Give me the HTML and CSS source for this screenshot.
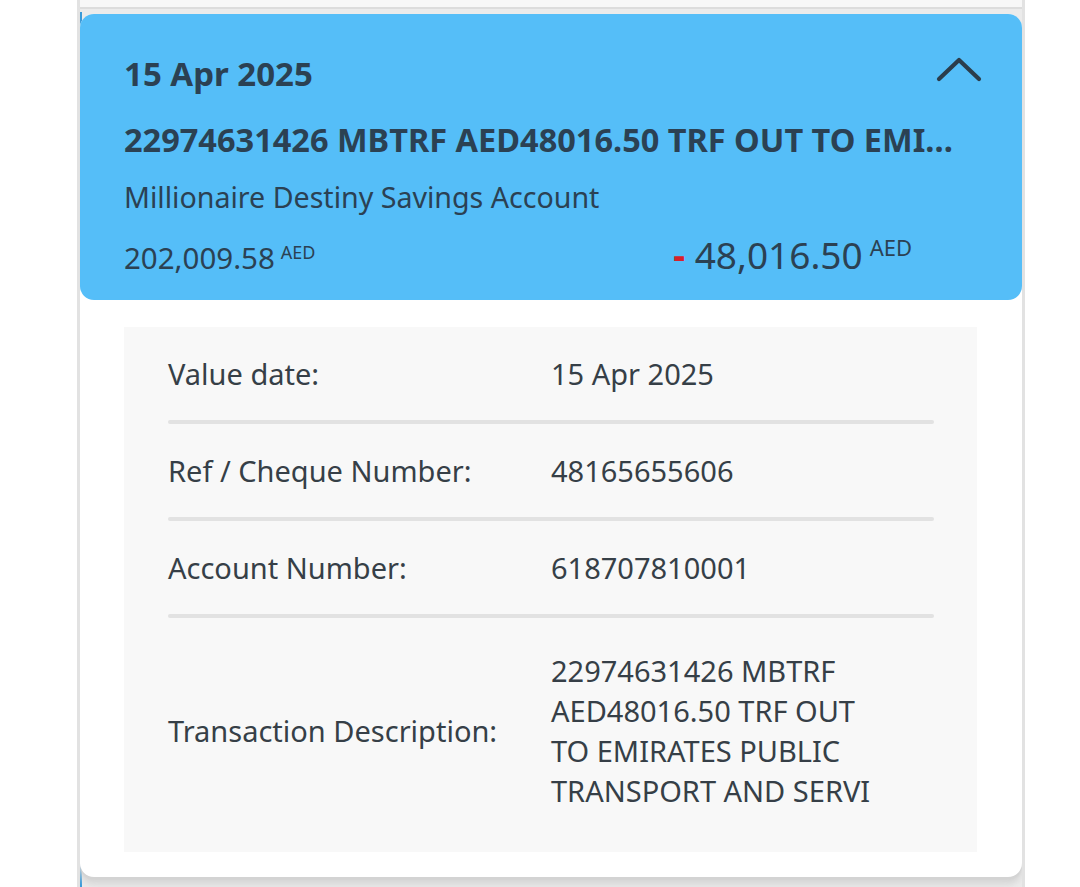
FILE: index.html
```html
<!DOCTYPE html>
<html>
<head>
<meta charset="utf-8">
<link rel="stylesheet" href="styles.css">
</head>
<body>
<div class="page">
  <div class="prev"></div>
  <div class="item">
    <div class="card">
      <div class="header">
        <div class="top-row">
          <div class="date">15 Apr 2025</div>
          <svg class="chevron" width="46" height="28" viewBox="0 0 46 28"><path d="M3 24 L23 5 L43 24" fill="none" stroke="#2b3d4b" stroke-width="4.2" stroke-linecap="round" stroke-linejoin="round"/></svg>
        </div>
        <div class="title">22974631426 MBTRF AED48016.50 TRF OUT TO EMIRATES PUBLIC TRANSPORT AND SERVI</div>
        <div class="account">Millionaire Destiny Savings Account</div>
        <div class="amounts">
          <div class="balance">202,009.58<span class="cur">AED</span></div>
          <div class="amount"><span class="minus">-</span> 48,016.50<span class="cur cur-lg">AED</span></div>
        </div>
      </div>
      <div class="details">
        <div class="row">
          <div class="label">Value date:</div>
          <div class="value">15 Apr 2025</div>
        </div>
        <div class="divider"></div>
        <div class="row">
          <div class="label">Ref / Cheque Number:</div>
          <div class="value">48165655606</div>
        </div>
        <div class="divider"></div>
        <div class="row">
          <div class="label">Account Number:</div>
          <div class="value">618707810001</div>
        </div>
        <div class="divider"></div>
        <div class="row row-last">
          <div class="label">Transaction Description:</div>
          <div class="value value-wrap">22974631426 MBTRF AED48016.50 TRF OUT TO EMIRATES PUBLIC TRANSPORT AND SERVI</div>
        </div>
      </div>
    </div>
  </div>
</div>
</body>
</html>
```

FILE: styles.css
```css
html, body {
  margin: 0;
  padding: 0;
  background: #ffffff;
}
body {
  font-family: "Noto Sans", "Open Sans", sans-serif;
  width: 1080px;
  height: 887px;
  overflow: hidden;
}
.page {
  margin-left: 77px;
  width: 942px;
  height: 887px;
  border-left: 3px solid #e2e2e2;
  border-right: 3px solid #e2e2e2;
  background: #ebebeb;
  overflow: hidden;
}
.prev {
  height: 7px;
  background: #f7f7f7;
  border-bottom: 2px solid #dcdcdc;
}
.item {
  margin-top: 3px;
  padding-top: 2px;
  padding-bottom: 20px;
  background: linear-gradient(to right, #3a9ad8 0, #3a9ad8 2px, transparent 2px);
}
.card {
  background: #ffffff;
  border-radius: 14px;
  height: 863px;
  box-sizing: border-box;
  box-shadow: 0 3px 2px #d3d3d3, 0 8px 6px #d8d8d8;
  position: relative;
}
.header {
  background: #55bef8;
  border-radius: 14px;
  height: 286px;
  box-sizing: border-box;
  padding: 41px 42px 0 44px;
  color: #2b4153;
}
.top-row {
  display: flex;
  justify-content: space-between;
  align-items: flex-start;
  height: 38px;
}
.date {
  font-size: 33px;
  font-weight: 700;
  line-height: 38px;
}
.chevron {
  margin-right: -2px;
}
.title {
  margin-top: 28px;
  margin-right: 15px;
  font-size: 32.5px;
  font-weight: 700;
  line-height: 38px;
  white-space: nowrap;
  overflow: hidden;
  text-overflow: ellipsis;
}
.account {
  margin-top: 20px;
  font-size: 28.6px;
  line-height: 36px;
}
.amounts {
  margin-top: 10px;
  display: flex;
  justify-content: space-between;
  align-items: baseline;
  padding-right: 68px;
  line-height: 44px;
}
.balance {
  font-size: 29.5px;
}
.amount {
  font-size: 37px;
}
.minus {
  color: #d8202a;
  font-weight: 700;
}
.cur {
  font-size: 18px;
  vertical-align: 10px;
  margin-left: 6px;
}
.cur-lg {
  font-size: 22px;
  vertical-align: 13px;
  margin-left: 7px;
}
.details {
  margin: 27px 45px 0 44px;
  background: #f8f8f8;
  padding: 0 43px 0 44px;
  color: #363f47;
}
.row {
  display: flex;
  align-items: center;
  padding: 27px 0 26px;
  font-size: 29px;
  line-height: 40px;
}
.row-last {
  padding: 33px 0 41px;
}
.label {
  width: 383px;
  flex-shrink: 0;
}
.value-wrap {
  width: 330px;
}
.divider {
  height: 4px;
  border-radius: 2px;
  background: #e2e2e2;
}
```
